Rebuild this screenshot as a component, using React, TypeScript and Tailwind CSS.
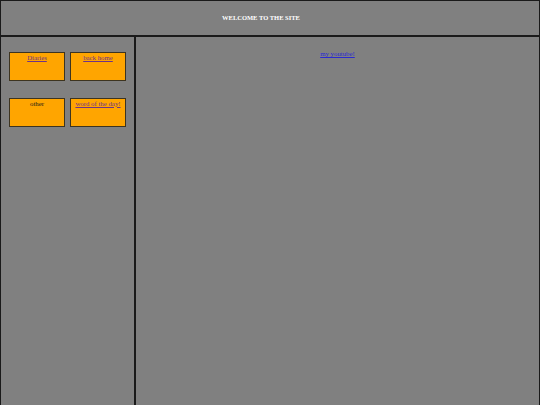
import React from 'react';

const serif = { fontFamily: '"Liberation Serif", "Times New Roman", serif' };

const Box: React.FC<{ label: string; link?: boolean }> = ({ label, link = true }) => (
  <div className="w-[56px] h-[29px] bg-[#ffa500] border-[1.5px] border-[#3d3420] text-center leading-[8px] pt-[0.5px]">
    {link ? (
      <a href="#" className="text-[#6e3388] underline">
        {label}
      </a>
    ) : (
      <span className="text-[#1a1a1a]">{label}</span>
    )}
  </div>
);

export default function App() {
  return (
    <div className="w-[540px] h-[405px] bg-[#808080] flex flex-col text-[6.8px] overflow-hidden" style={serif}>
      <header className="h-[37px] shrink-0 border-t border-x border-b-2 border-[#1a1a1a] flex items-center justify-center pr-[18px]">
        <h1 className="text-white font-bold text-[6.5px] mt-[-1px]">WELCOME TO THE SITE</h1>
      </header>
      <div className="flex flex-1 min-h-0">
        <aside className="w-[136px] shrink-0 border-l border-r-2 border-[#1a1a1a] pl-[8px] pt-[15px]">
          <div className="grid grid-cols-[56px_56px] gap-x-[5px] gap-y-[17px]">
            <Box label="Diaries" />
            <Box label="back home" />
            <Box label="other" link={false} />
            <Box label="word of the day!" />
          </div>
        </aside>
        <main className="flex-1 border-r border-[#1a1a1a] text-center pt-[12px]">
          <a href="#" className="text-[#2a2ad0] underline">
            my youtube!
          </a>
        </main>
      </div>
    </div>
  );
}
